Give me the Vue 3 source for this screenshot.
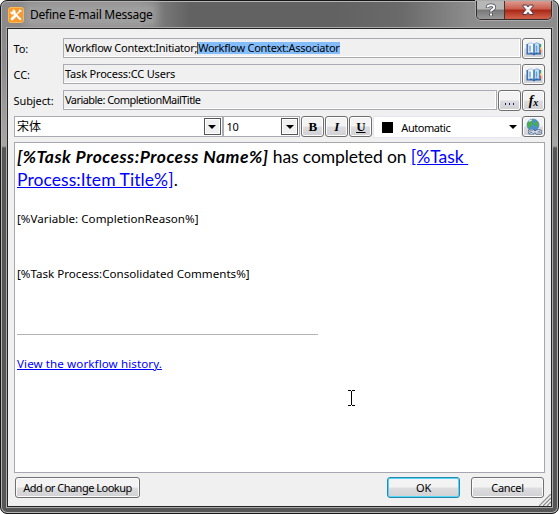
<script setup>
const fields = [
  { label: 'To:', value: 'Workflow Context:Initiator;', selected: 'Workflow Context:Associator', cls: 'to' },
  { label: 'CC:', value: 'Task Process:CC Users', cls: 'cc' }
]
</script>

<template>
  <div class="window">
    <header class="titlebar">
      <svg class="app-icon" width="16" height="16" viewBox="0 0 16 16">
        <rect x=".5" y=".5" width="15" height="15" rx="2" fill="#f89a2c" stroke="#ffb850" />
        <path d="M5 5 L12.3 12.3" stroke="#fff" stroke-width="2" stroke-linecap="round" />
        <path d="M3 4.8 A1.9 1.9 0 1 0 4.8 3" stroke="#fff" stroke-width="1.6" fill="none" />
        <path d="M12.5 3.5 L8.5 7.5" stroke="#fff" stroke-width="1.4" />
        <path d="M6.8 9.2 L4 12" stroke="#fff" stroke-width="2.8" stroke-linecap="round" />
        <path d="M11.3 2.7 L13.3 4.7" stroke="#fff" stroke-width="1.6" />
      </svg>
      <span class="title">Define E-mail Message</span>
      <div class="caption">
        <span class="help">
          <svg width="14" height="14" viewBox="0 0 14 14" fill="none">
            <path d="M3.5 5 V4.2 Q3.5 2.2 7 2.2 Q10.3 2.2 10.3 4.5 Q10.3 5.7 8.5 6.5 Q7 7.2 7 8.7 M7 10.2 V12.7" stroke="#424450" stroke-width="3.4" />
            <path d="M3.5 4.6 V4.2 Q3.5 2.2 7 2.2 Q10.3 2.2 10.3 4.5 Q10.3 5.7 8.5 6.5 Q7 7.2 7 8.4 M7 10.4 V12.4" stroke="#fff" stroke-width="2" />
          </svg>
        </span>
        <span class="close">
          <svg width="14" height="12" viewBox="0 0 14 12">
            <path d="M2 1 H5.5 L7 3 L8.5 1 H12 V2.3 L9.2 5.7 L12 9 V10.5 H8.5 L7 8.4 L5.5 10.5 H2 V9 L4.8 5.7 L2 2.3 Z" fill="#f4f4f4" stroke="#503c48" />
          </svg>
        </span>
      </div>
    </header>

    <main class="client">
      <div v-for="f in fields" :key="f.label" class="row">
        <label>{{ f.label }}</label>
        <div class="field"><span :class="f.cls">{{ f.value }}</span><span v-if="f.selected" class="selected">{{ f.selected }}</span></div>
        <button class="tool">
          <svg width="16" height="14" viewBox="0 0 16 14">
            <path d="M.5 2 H15 V12.5 H9.5 L8 13.5 L6.5 12.5 H.5 Z" fill="#2d62a8" />
            <path d="M2 1.5 Q5.5 0 8 2 V11.5 Q5.5 9.8 2 11.3 Z" fill="#f2f9ff" stroke="#78a6d8" stroke-width=".6" />
            <path d="M13.3 1.5 Q10.5 0 8 2 V11.5 Q10.5 9.8 13.3 11.3 Z" fill="#c6e4fb" stroke="#5388c7" stroke-width=".6" />
            <path d="M8 2 V12.5" stroke="#245a9c" />
            <path d="M4 3.5 V9.5 M10.5 3.5 V9.5" stroke="#6c9fd4" stroke-width="1.4" />
            <path d="M14.6 2 V5" stroke="#36a857" stroke-width="1.2" />
            <path d="M14.6 5 V8" stroke="#f6b33c" stroke-width="1.2" />
            <path d="M14.6 8 V11" stroke="#d95436" stroke-width="1.2" />
          </svg>
        </button>
      </div>
      <div class="row">
        <label>Subject:</label>
        <div class="field"><span class="subject">Variable: CompletionMailTitle</span></div>
        <button class="tool dots"><i></i><i></i><i></i></button>
        <button class="tool fx">f<small>x</small></button>
      </div>

      <div class="toolbar">
        <div class="combo font"><span class="cjk">宋体</span><b class="arrow"><i></i></b></div>
        <div class="combo size"><span>10</span><b class="arrow"><i></i></b></div>
        <button class="tool serif bold">B</button>
        <button class="tool serif italic">I</button>
        <button class="tool serif under">U</button>
        <div class="color"><i class="swatch"></i><span>Automatic</span><i class="tri"></i></div>
        <button class="tool">
          <svg width="18" height="18" viewBox="0 0 18 18">
            <circle cx="8" cy="7" r="6" fill="#4a90d0" stroke="#5c8ab8" stroke-width=".8" />
            <path d="M3 4 Q5 1 8 1.5 L7 4 L9 6 L6 8 L5 11 Q2.5 9 2 6 Z M9 2 L13 4 L13.6 8 L11 9 L9 6 L11 4 Z" fill="#4cab52" />
            <path d="M4 3.5 Q5.5 2 7 2.2" stroke="#d9f2ff" stroke-width="1.2" fill="none" />
            <g fill="none">
              <rect x="4" y="12" width="5" height="3.4" rx="1.7" stroke="#4a5f85" stroke-width="2.2" />
              <rect x="11" y="12.4" width="5" height="3.4" rx="1.7" stroke="#4a5f85" stroke-width="2.2" />
              <rect x="4" y="12" width="5" height="3.4" rx="1.7" stroke="#e3ebf6" />
              <rect x="11" y="12.4" width="5" height="3.4" rx="1.7" stroke="#e3ebf6" />
              <path d="M7 13.9 H13" stroke="#fff" />
            </g>
          </svg>
        </button>
      </div>

      <section class="editor">
        <p class="headline"><span class="process">[%Task Process:Process Name%]</span><span class="done"> has completed on </span><a class="item1">[%Task&nbsp;</a><br><a class="item2">Process:Item Title%]</a>.</p>
        <p class="reason">[%Variable: CompletionReason%]</p>
        <p class="comments">[%Task Process:Consolidated Comments%]</p>
        <div class="rule"></div>
        <p class="history"><a>View the workflow history.</a></p>
        <svg class="cursor" width="7" height="16" viewBox="0 0 7 16">
          <path d="M0 .5 H3 M4 .5 H7 M3.5 1 V15 M0 15.5 H3 M4 15.5 H7" stroke="#000" fill="none" />
        </svg>
      </section>

      <footer>
        <button class="push lookup"><span>Add or Change Lookup</span></button>
        <button class="push ok">OK</button>
        <button class="push cancel">Cancel</button>
      </footer>
      <svg class="grip" width="12" height="12" viewBox="0 0 12 12">
        <path d="M0 12 L12 0 M4 12 L12 4 M8 12 L12 8" stroke="#8b8b8b" stroke-width="1.2" />
      </svg>
    </main>
  </div>
</template>

<style>
body { margin: 0; background: #fff; }
</style>
<style scoped>
* { box-sizing: border-box; }
.window {
  width: 559px; height: 514px; display: flex; flex-direction: column; padding: 2px 6px 6px;
  border: 1px solid #171717; border-radius: 7px;
  box-shadow: inset 0 0 0 1px #b5b5b5;
  background:
    linear-gradient(180deg, transparent 0 145px, #565656 147px),
    linear-gradient(180deg, transparent 0 28px, #8e8c8c 60px, #a8a5a5 146px),
    linear-gradient(90deg, #8b8989 0 25%, #626262 34% 60%, #6a6a6a 72%, #8c8c8c 84% 100%);
  font-family: "Noto Sans", sans-serif; font-size: 11px; color: #000;
}
.titlebar { height: 25px; display: flex; flex: none; align-items: flex-start; position: relative; }
.app-icon { margin: 4px 0 0 1px; }
.title {
  font-size: 12px; line-height: 16px; margin: 4px 0 0 6px; letter-spacing: -.25px; white-space: nowrap;
  background: rgba(180,180,180,.5); box-shadow: 0 0 8px 5px rgba(180,180,180,.5);
}
.caption { display: flex; margin-left: auto; margin-top: -2px; width: 76px; height: 19px; border: 1px solid #342d2d; border-top: 0; border-radius: 0 0 5px 5px; box-shadow: 0 0 0 1px #aaa; overflow: hidden; }
.help, .close { display: flex; justify-content: center; align-items: center; }
.help { width: 28px; border-right: 1px solid #443333; background: linear-gradient(#b7b7b7 0 45%, #777 50%, #999); }
.close { flex: 1; background: linear-gradient(#dc9b90, #c95d4c 45%, #a92616 50%, #cb5944 90%); }
.client { flex: 1; min-height: 0; position: relative; border: 1px solid #242424; background: #f0f0f0; padding: 9px 6px 0; display: flex; flex-direction: column; box-shadow: 0 0 0 1px #aaa; }
.row { display: flex; height: 21px; margin-bottom: 5px; gap: 1px; flex: none; }
label { width: 48px; line-height: 22px; letter-spacing: -.1px; text-indent: -.5px; }
.field { flex: 1; height: 20px; border: 1px solid #a9abb0; box-shadow: inset -1px -1px #fff; line-height: 18px; padding-left: 1px; white-space: nowrap; letter-spacing: -.26px; }
.cc { letter-spacing: -.18px; }
.subject { letter-spacing: -.55px; }
.selected { display: inline-block; height: 12px; line-height: 12px; background: #84bdfb; border-left: 1px solid #735128; }
.tool { width: 23px; height: 21px; flex: none; display: flex; justify-content: center; align-items: center; padding: 0; margin: 0; border: 1px solid #6f6f6f; border-radius: 3px; box-shadow: inset 0 0 0 1px #fff; background: linear-gradient(#f3f3f3 48%, #dddde0 52%, #d1d1d5); color: #000; }
.dots { gap: 3px; padding-top: 7px; }
.dots i { width: 1px; height: 2px; background: #172064; }
.fx { font: italic bold 14px "Liberation Serif", serif; }
.fx small { font-size: 10px; padding-top: 3px; }
.toolbar { height: 22px; display: flex; flex: none; margin-bottom: 4px; }
.combo { height: 21px; border: 1px solid #a9abb0; background: #fff; display: flex; align-items: center; justify-content: space-between; padding: 0 1px 0 2px; }
.font { width: 209px; }
.size { width: 78px; margin-right: 1px; letter-spacing: -.4px; padding-left: 3px; }
.cjk { font: 12px/17px "Noto Sans CJK SC", sans-serif; margin-top: -2px; }
.arrow { width: 17px; height: 17px; border: 1px solid #555; background: #f0f0f0; display: flex; align-items: center; justify-content: center; box-shadow: inset 0 0 0 1px #fff; }
.arrow i, .tri { width: 0; height: 0; border: 4px solid transparent; border-top-color: #000; border-bottom: 0; }
.serif { font: bold 13px/18px "Liberation Serif", serif; margin-right: 1px; }
.italic { font-style: italic; }
.under { text-decoration: underline; }
.color { width: 149px; height: 22px; background: #fff; border: 1px solid #e4e5ee; border-radius: 2px; display: flex; align-items: center; padding: 0 4px 0 8px; letter-spacing: -.45px; }
.swatch { width: 11px; height: 11px; background: #000; margin-right: 8px; }
.tri { margin-left: auto; }
.editor { position: relative; width: 531px; height: 331px; flex: none; background: #fff; border: 1px solid #a7a8ae; padding: 2px 2px 3px; }
p { margin: 0; white-space: nowrap; }
a { color: #00f; text-decoration: underline; }
.headline { font: 17.5px/23px Lato, sans-serif; height: 64px; }
.process { font-weight: 700; font-style: italic; letter-spacing: .49px; }
.done { letter-spacing: -.12px; }
.item2 { letter-spacing: .07px; }
.reason, .comments, .history { font-size: 11.6px; line-height: 20px; }
.reason { letter-spacing: .04px; }
.comments { margin-top: 35px; }
.rule { height: 1px; width: 301px; background: #b4b4b4; margin-top: 50px; }
.history { margin-top: 19px; letter-spacing: .09px; }
.cursor { position: absolute; left: 333px; top: 247px; }
footer { height: 21px; margin: 4px 0 0 1px; display: flex; flex: none; }
.push { border: 1px solid #707070; border-radius: 3px; height: 21px; padding: 0; box-shadow: inset 0 0 0 1px #fcfcfc; background: linear-gradient(#f3f3f3 48%, #dddddf 52%, #d1d1d3); font: 11px/18px "Noto Sans", sans-serif; color: #000; white-space: nowrap; letter-spacing: -.3px; }
.lookup { width: 125px; letter-spacing: -.5px; }
.ok { width: 73px; margin-left: 247px; border-color: #238aad; box-shadow: inset 0 0 0 1px #55d5fa; }
.cancel { width: 73px; margin-left: 11px; }
.grip { position: absolute; right: 0; bottom: 0; }
</style>
